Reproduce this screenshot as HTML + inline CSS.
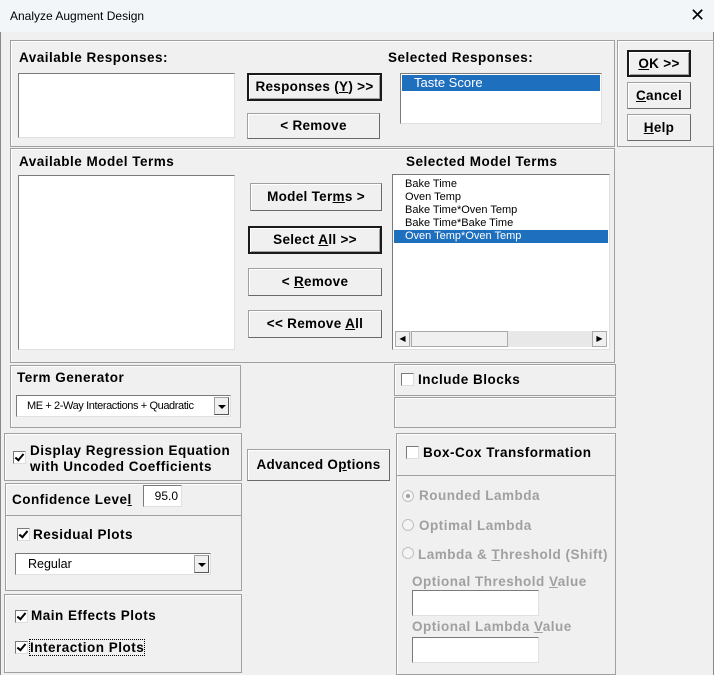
<!DOCTYPE html>
<html><head><style>
body{margin:0;width:714px;height:675px;overflow:hidden;background:#f0f0f0;font-family:"Liberation Sans",Arial,sans-serif;position:relative}
.a{position:absolute}
.fr{position:absolute;border:1px solid #a0a0a0;box-shadow:inset 1px 1px 0 #fff}
.lb{position:absolute;font-weight:bold;font-size:13.5px;letter-spacing:0.5px;color:#000;white-space:nowrap}
.btn{position:absolute;background:#f0f0f0;border:1px solid #a0a0a0;border-right-color:#696969;border-bottom-color:#696969;box-shadow:inset 1px 1px 0 #fff;font-weight:bold;font-size:13.5px;letter-spacing:0.3px;text-align:center;box-sizing:border-box}
.btn.d{border:2px solid #1a1a1a;box-shadow:inset 1px 1px 0 #fff,inset -1px -1px 0 #a0a0a0}
.wb{position:absolute;background:#fff;border:1px solid #7a7a7a;border-right-color:#e0e0e0;border-bottom-color:#e0e0e0;box-sizing:border-box}
.cb{position:absolute;width:11px;height:11px;background:#fff;border:1px solid #7a7a7a;border-right-color:#ddd;border-bottom-color:#ddd}
.ck:after{content:"";position:absolute;left:3px;top:0px;width:3px;height:7px;border:solid #000;border-width:0 2px 2px 0;transform:rotate(40deg)}
.li{font-size:11px;height:13px;line-height:13px;padding-left:10px;white-space:nowrap}
.g{color:#a0a0a0}
.dd{position:absolute;width:15px;background:#f0f0f0;border:1px solid #a0a0a0;border-right-color:#555;border-bottom-color:#555;box-sizing:border-box}
.dd:after{content:"";position:absolute;left:3px;top:7px;border:4px solid transparent;border-top:4px solid #000;border-bottom:0}
.rd{position:absolute;width:10px;height:10px;border-radius:50%;border:1px solid #c0c0c0;background:#f4f4f4}
</style></head><body>
<div class="a" style="left:0;top:0;width:714px;height:32px;background:#f3f6f9"></div>
<div class="a" style="left:10px;top:9px;font-size:12px">Analyze Augment Design</div>
<div class="a" style="left:690px;top:5px;font-size:18px;font-weight:300">✕</div>
<div class="a" style="left:0;top:32px;width:1px;height:643px;background:#888"></div>
<div class="a" style="left:713px;top:32px;width:1px;height:643px;background:#888"></div>

<div class="fr" style="left:10px;top:40px;width:603px;height:105px"></div>
<div class="fr" style="left:617px;top:40px;width:95px;height:105px"></div>
<div class="lb" style="left:19px;top:50px">Available Responses:</div>
<div class="lb" style="left:388px;top:50px">Selected Responses:</div>
<div class="wb" style="left:18px;top:73px;width:217px;height:65px"></div>
<div class="btn d" style="left:247px;top:73px;width:135px;height:28px;line-height:24px">Responses (<u>Y</u>) &gt;&gt;</div>
<div class="btn" style="left:247px;top:113px;width:133px;height:26px;line-height:24px">&lt; Remove</div>
<div class="wb" style="left:400px;top:73px;width:202px;height:51px;padding:1px">
<div style="background:#1e6fbe;color:#fff;font-size:13px;height:16px;line-height:16px;padding-left:12px">Taste Score</div></div>
<div class="btn d" style="left:627px;top:50px;width:64px;height:27px;line-height:23px"><u>O</u>K &gt;&gt;</div>
<div class="btn" style="left:627px;top:82px;width:64px;height:27px;line-height:25px"><u>C</u>ancel</div>
<div class="btn" style="left:627px;top:114px;width:64px;height:27px;line-height:25px"><u>H</u>elp</div>

<div class="fr" style="left:10px;top:148px;width:603px;height:213px"></div>
<div class="lb" style="left:19px;top:154px">Available Model Terms</div>
<div class="lb" style="left:406px;top:154px">Selected Model Terms</div>
<div class="wb" style="left:18px;top:175px;width:217px;height:175px"></div>
<div class="btn" style="left:250px;top:183px;width:132px;height:28px;line-height:26px">Model Ter<u>m</u>s &gt;</div>
<div class="btn d" style="left:248px;top:226px;width:134px;height:28px;line-height:24px">Select <u>A</u>ll &gt;&gt;</div>
<div class="btn" style="left:248px;top:268px;width:134px;height:28px;line-height:26px">&lt; <u>R</u>emove</div>
<div class="btn" style="left:248px;top:310px;width:134px;height:28px;line-height:26px">&lt;&lt; Remove <u>A</u>ll</div>
<div class="wb" style="left:392px;top:174px;width:218px;height:176px;padding:1px">
<div class="li" style="padding-left:11px;margin-top:2px">Bake Time</div>
<div class="li" style="padding-left:11px">Oven Temp</div>
<div class="li" style="padding-left:11px">Bake Time*Oven Temp</div>
<div class="li" style="padding-left:11px">Bake Time*Bake Time</div>
<div class="li" style="padding-left:11px;background:#1e6fbe;color:#fff">Oven Temp*Oven Temp</div>
<div class="a" style="left:2px;top:156px;width:212px;height:16px;background:#e8e8e8">
<div class="a" style="left:0;top:0;width:15px;height:16px;background:#f0f0f0;border:1px solid #aaa;box-sizing:border-box;font-size:8px;text-align:center;line-height:14px">◀</div>
<div class="a" style="left:16px;top:0;width:97px;height:16px;background:#f0f0f0;border:1px solid #aaa;box-sizing:border-box"></div>
<div class="a" style="right:0;top:0;width:15px;height:16px;background:#f0f0f0;border:1px solid #aaa;box-sizing:border-box;font-size:8px;text-align:center;line-height:14px">▶</div>
</div></div>

<div class="fr" style="left:10px;top:365px;width:229px;height:61px"></div>
<div class="lb" style="left:17px;top:370px">Term Generator</div>
<div class="wb" style="left:16px;top:395px;width:215px;height:22px"><span class="a" style="left:10px;top:4px;font-size:11px;letter-spacing:-0.4px;white-space:nowrap">ME + 2-Way Interactions + Quadratic</span><div class="dd" style="right:1px;top:1px;height:18px"></div></div>
<div class="fr" style="left:394px;top:364px;width:220px;height:30px"></div>
<div class="cb" style="left:401px;top:373px"></div>
<div class="lb" style="left:418px;top:372px">Include Blocks</div>
<div class="fr" style="left:394px;top:397px;width:220px;height:29px"></div>

<div class="fr" style="left:4px;top:433px;width:236px;height:46px"></div>
<div class="cb ck" style="left:13px;top:451px"></div>
<div class="lb" style="left:30px;top:443px;line-height:16px">Display Regression Equation<br>with Uncoded Coefficients</div>
<div class="btn" style="left:247px;top:449px;width:143px;height:32px;line-height:30px">Advanced O<u>p</u>tions</div>
<div class="fr" style="left:5px;top:483px;width:235px;height:106px"></div>
<div class="a" style="left:6px;top:515px;width:235px;height:1px;background:#a0a0a0"></div>
<div class="lb" style="left:12px;top:492px">Confidence Leve<u>l</u></div>
<div class="wb" style="left:143px;top:485px;width:39px;height:22px;font-size:12px;text-align:right;padding-right:3px;line-height:20px">95.0</div>
<div class="cb ck" style="left:17px;top:528px"></div>
<div class="lb" style="left:33px;top:527px">Residual Plots</div>
<div class="wb" style="left:15px;top:553px;width:196px;height:22px"><span class="a" style="left:12px;top:3px;font-size:12.5px">Regular</span><div class="dd" style="right:1px;top:1px;height:18px"></div></div>
<div class="fr" style="left:4px;top:594px;width:236px;height:77px"></div>
<div class="cb ck" style="left:15px;top:610px"></div>
<div class="lb" style="left:31px;top:608px">Main Effects Plots</div>
<div class="cb ck" style="left:15px;top:641px"></div>
<div class="lb" style="left:30px;top:640px;outline:1px dotted #000">Interaction Plots</div>

<div class="fr" style="left:396px;top:433px;width:218px;height:240px"></div>
<div class="a" style="left:397px;top:475px;width:218px;height:1px;background:#a0a0a0"></div>
<div class="cb" style="left:406px;top:446px"></div>
<div class="lb" style="left:423px;top:445px">Box-Cox Transformation</div>
<div class="rd" style="left:402px;top:490px"><div class="a" style="left:3px;top:3px;width:4px;height:4px;border-radius:50%;background:#a0a0a0"></div></div>
<div class="lb g" style="left:419px;top:488px">Rounded Lambda</div>
<div class="rd" style="left:402px;top:519px"></div>
<div class="lb g" style="left:419px;top:518px">Optimal Lambda</div>
<div class="rd" style="left:402px;top:547px"></div>
<div class="lb g" style="left:418px;top:547px">Lambda &amp; <u>T</u>hreshold (Shift)</div>
<div class="lb g" style="left:412px;top:574px">Optional Threshold <u>V</u>alue</div>
<div class="wb" style="left:412px;top:590px;width:127px;height:26px"></div>
<div class="lb g" style="left:412px;top:619px">Optional Lambda <u>V</u>alue</div>
<div class="wb" style="left:412px;top:637px;width:127px;height:26px"></div>
</body></html>
